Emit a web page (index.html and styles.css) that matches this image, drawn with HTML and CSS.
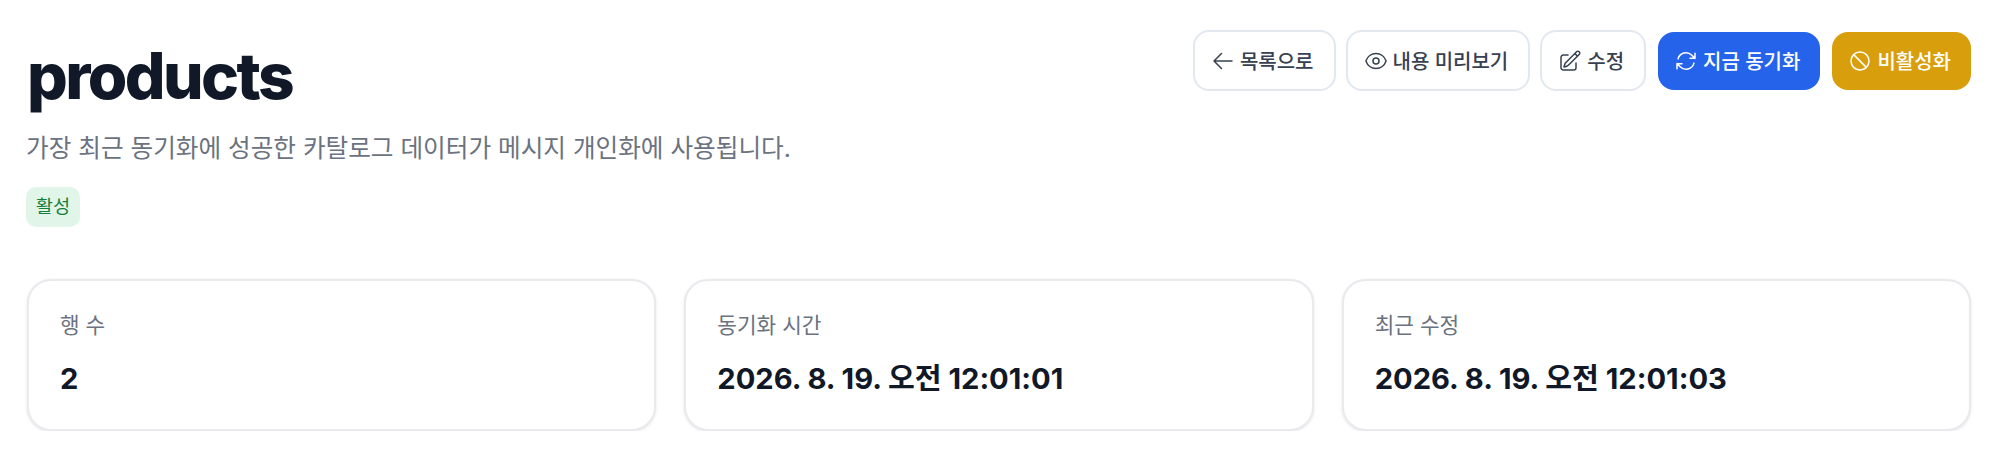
FILE: index.html
```html
<!DOCTYPE html>
<html lang="ko">
<head>
<meta charset="utf-8">
<title>products</title>
<link rel="stylesheet" href="styles.css">
</head>
<body>
  <div id="app">
    <div class="head">
      <div class="head-text">
        <h1>products</h1>
        <p class="desc">가장 최근 동기화에 성공한 카탈로그 데이터가 메시지 개인화에 사용됩니다.</p>
        <span class="tag">활성</span>
      </div>
      <div class="actions">
        <a class="btn btn-line">
          <svg viewBox="0 0 24 24"><path d="M10.5 19.5 3 12m0 0 7.5-7.5M3 12h18"/></svg>
          목록으로
        </a>
        <a class="btn btn-line">
          <svg viewBox="0 0 24 24"><path d="M2.036 12.322a1.012 1.012 0 0 1 0-.639C3.423 7.51 7.36 4.5 12 4.5c4.638 0 8.573 3.007 9.963 7.178.07.207.07.431 0 .639C20.577 16.49 16.64 19.5 12 19.5c-4.638 0-8.573-3.007-9.963-7.178Z"/><path d="M15 12a3 3 0 1 1-6 0 3 3 0 0 1 6 0Z"/></svg>
          내용 미리보기
        </a>
        <a class="btn btn-line">
          <svg viewBox="0 0 24 24"><path d="m16.862 4.487 1.687-1.688a1.875 1.875 0 1 1 2.652 2.652L10.582 16.07a4.5 4.5 0 0 1-1.897 1.13L6 18l.8-2.685a4.5 4.5 0 0 1 1.13-1.897l8.932-8.931Zm0 0L19.5 7.125M18 14v4.75A2.25 2.25 0 0 1 15.75 21H5.25A2.25 2.25 0 0 1 3 18.75V8.25A2.25 2.25 0 0 1 5.25 6H10"/></svg>
          수정
        </a>
        <a class="btn btn-blue">
          <svg viewBox="0 0 24 24"><path d="M16.023 9.348h4.992v-.001M2.985 19.644v-4.992m0 0h4.992m-4.993 0 3.181 3.183a8.25 8.25 0 0 0 13.803-3.7M4.031 9.865a8.25 8.25 0 0 1 13.803-3.7l3.181 3.182m0-4.991v4.99"/></svg>
          지금 동기화
        </a>
        <a class="btn btn-amber">
          <svg viewBox="0 0 24 24"><path d="M18.364 18.364A9 9 0 0 0 5.636 5.636m12.728 12.728A9 9 0 0 1 5.636 5.636m12.728 12.728L5.636 5.636"/></svg>
          비활성화
        </a>
      </div>
    </div>
    <div class="cards">
      <div class="card">
        <div class="card-label">행 수</div>
        <div class="card-value">2</div>
      </div>
      <div class="card">
        <div class="card-label">동기화 시간</div>
        <div class="card-value">2026. 8. 19. 오전 12:01:01</div>
      </div>
      <div class="card">
        <div class="card-label">최근 수정</div>
        <div class="card-value">2026. 8. 19. 오전 12:01:03</div>
      </div>
    </div>
  </div>
</body>
</html>
```

FILE: styles.css
```css
* {
  padding: 0;
  margin: 0;
  box-sizing: border-box;
}

body {
  background: #fff;
  font-family: Inter, "Noto Sans CJK KR", sans-serif;
  color: #111827;
}

#app {
  padding: 30px 29px 0 27px;
}

.head {
  display: flex;
  justify-content: space-between;
  align-items: flex-start;
}

h1 {
  margin-top: 10px;
  font-size: 64px;
  line-height: 72px;
  font-weight: 800;
  letter-spacing: -2.6px;
}

.desc {
  margin-top: 18px;
  margin-left: -1px;
  font-size: 24.63px;
  line-height: 36px;
  color: #6b7280;
}

.tag {
  display: block;
  width: 54px;
  margin-top: 21px;
  margin-left: -1px;
  height: 40px;
  line-height: 39px;
  text-align: center;
  background: #e1f6e8;
  color: #15803d;
  font-size: 18.67px;
  border-radius: 10px;
}

.actions {
  display: flex;
  align-items: center;
  gap: 12px;
}

.btn {
  display: flex;
  align-items: center;
  justify-content: center;
  gap: 5px;
  padding: 0 20px 0 16px;
  font-size: 20px;
  font-weight: 500;
  border-radius: 16px;
  white-space: nowrap;
}

.btn svg {
  width: 24px;
  height: 24px;
  fill: none;
  stroke: currentColor;
  stroke-width: 1.5;
  stroke-linecap: round;
  stroke-linejoin: round;
}

.btn-line {
  height: 61px;
  background: #fff;
  border: 2px solid #e2e8f0;
  color: #374151;
}

.btn-line + .btn-line {
  margin-left: -2px;
}

.btn-blue {
  height: 58px;
  background: #2563eb;
  color: #fff;
}

.btn-amber {
  height: 58px;
  background: #d99e0b;
  color: #fff;
}

.cards {
  display: grid;
  grid-template-columns: repeat(3, 1fr);
  gap: 28px;
  margin-top: 52px;
}

.card {
  height: 152px;
  padding: 29px 31px;
  background: #fff;
  border: 2px solid #e9e9ee;
  border-radius: 24px;
  box-shadow: 0 1px 3px rgba(17, 24, 39, 0.1);
}

.card-label {
  font-size: 21.33px;
  line-height: 30px;
  color: #6b7280;
}

.card-value {
  margin-top: 19px;
  font-size: 29.15px;
  line-height: 40px;
  font-weight: 700;
}
```
